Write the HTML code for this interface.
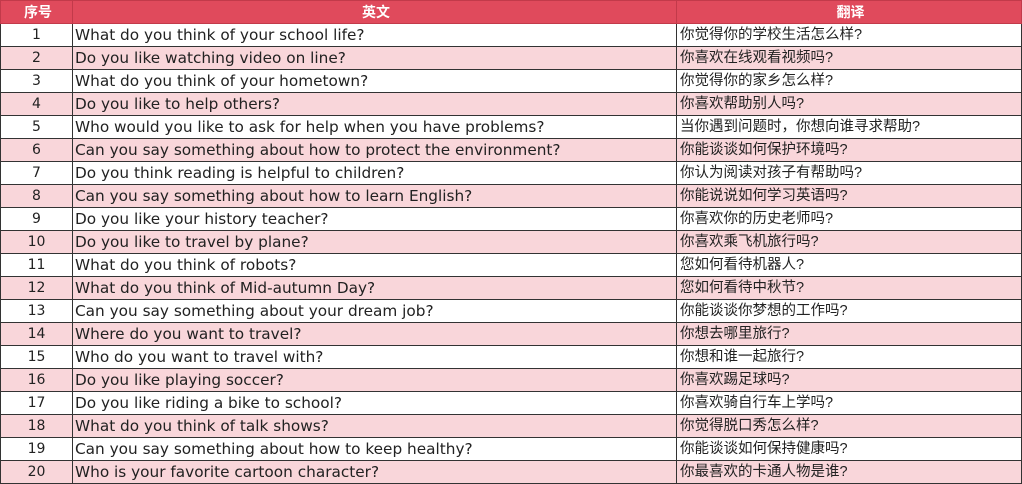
<!DOCTYPE html>
<html><head><meta charset="utf-8"><style>
*{margin:0;padding:0;box-sizing:border-box}
body{width:1022px;height:484px;background:#fff;overflow:hidden;font-family:"Liberation Sans","Noto Sans CJK SC",sans-serif;color:#222}
table{border-collapse:collapse;position:absolute;left:0;top:0;table-layout:fixed;width:1021px}
td,th{border:1px solid #333;height:23px;font-size:14.5px;padding:0 0 0 3px;white-space:nowrap;overflow:hidden;line-height:21px}
th{background:#e04a5c;color:#fff;font-weight:bold;text-align:center;font-size:14px;border-color:#c23a4a}
td:first-child{text-align:center;padding:0;font-family:"DejaVu Sans",sans-serif;font-size:14px}
td:nth-child(2){font-family:"DejaVu Sans",sans-serif;font-size:15.3px;padding-left:2px}
tr:nth-child(odd) td{background:#f9d6da}
</style></head><body>
<table>
<colgroup><col style="width:72px"><col style="width:604px"><col style="width:345px"></colgroup>
<tr><th>序号</th><th>英文</th><th>翻译</th></tr>
<tr><td>1</td><td>What do you think of your school life?</td><td>你觉得你的学校生活怎么样?</td></tr>
<tr><td>2</td><td>Do you like watching video on line?</td><td>你喜欢在线观看视频吗?</td></tr>
<tr><td>3</td><td>What do you think of your hometown?</td><td>你觉得你的家乡怎么样?</td></tr>
<tr><td>4</td><td>Do you like to help others?</td><td>你喜欢帮助别人吗?</td></tr>
<tr><td>5</td><td>Who would you like to ask for help when you have problems?</td><td>当你遇到问题时，你想向谁寻求帮助?</td></tr>
<tr><td>6</td><td>Can you say something about how to protect the environment?</td><td>你能谈谈如何保护环境吗?</td></tr>
<tr><td>7</td><td>Do you think reading is helpful to children?</td><td>你认为阅读对孩子有帮助吗?</td></tr>
<tr><td>8</td><td>Can you say something about how to learn English?</td><td>你能说说如何学习英语吗?</td></tr>
<tr><td>9</td><td>Do you like your history teacher?</td><td>你喜欢你的历史老师吗?</td></tr>
<tr><td>10</td><td>Do you like to travel by plane?</td><td>你喜欢乘飞机旅行吗?</td></tr>
<tr><td>11</td><td>What do you think of robots?</td><td>您如何看待机器人?</td></tr>
<tr><td>12</td><td>What do you think of Mid-autumn Day?</td><td>您如何看待中秋节?</td></tr>
<tr><td>13</td><td>Can you say something about your dream job?</td><td>你能谈谈你梦想的工作吗?</td></tr>
<tr><td>14</td><td>Where do you want to travel?</td><td>你想去哪里旅行?</td></tr>
<tr><td>15</td><td>Who do you want to travel with?</td><td>你想和谁一起旅行?</td></tr>
<tr><td>16</td><td>Do you like playing soccer?</td><td>你喜欢踢足球吗?</td></tr>
<tr><td>17</td><td>Do you like riding a bike to school?</td><td>你喜欢骑自行车上学吗?</td></tr>
<tr><td>18</td><td>What do you think of talk shows?</td><td>你觉得脱口秀怎么样?</td></tr>
<tr><td>19</td><td>Can you say something about how to keep healthy?</td><td>你能谈谈如何保持健康吗?</td></tr>
<tr><td>20</td><td>Who is your favorite cartoon character?</td><td>你最喜欢的卡通人物是谁?</td></tr>
</table>
</body></html>
